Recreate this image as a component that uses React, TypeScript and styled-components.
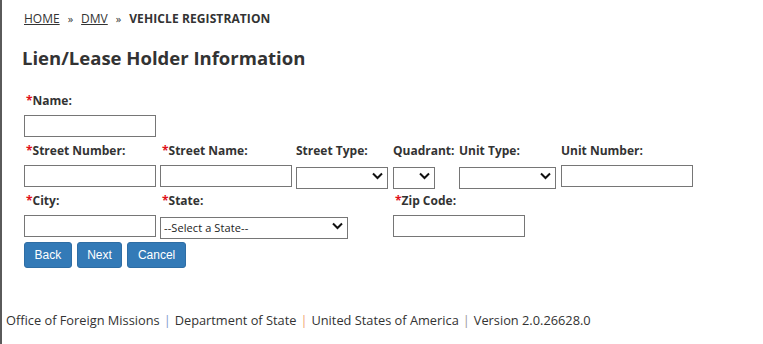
import React from "react";
import styled, { createGlobalStyle } from "styled-components";

const Global = createGlobalStyle`
  html, body { margin: 0; padding: 0; background: #fff; }
  body {
    min-height: 100vh;
    box-sizing: border-box;
    border-left: 2px solid #5a5a5a;
    font-family: "Open Sans", "DejaVu Sans", sans-serif;
    color: #333;
  }
`;

const Page = styled.div`
  padding-left: 22px;
  padding-top: 11px;
`;

const Breadcrumb = styled.nav`
  display: flex;
  align-items: center;
  gap: 6px;
  font-size: 12px;
  line-height: 16px;
  color: #333;
`;

const Crumb = styled.a`
  color: #333;
  text-decoration: underline;
`;

const Sep = styled.span`
  font-size: 11px;
  margin: 0 2px;
`;

const Current = styled.span`
  font-weight: 700;
  letter-spacing: 0.1px;
`;

const Title = styled.h1`
  margin: 19px 0 0 -2px;
  font-size: 18.5px;
  line-height: 24px;
  font-weight: 700;
  color: #333;
`;

const FormGrid = styled.div`
  margin-top: 17px;
  display: grid;
  grid-template-columns: 132px 132px 93px 62px 98px 131px;
  column-gap: 4px;
  align-items: start;
`;

const Field = styled.div<{ $span?: number; $start?: number }>`
  display: flex;
  flex-direction: column;
  grid-column: ${(p) => (p.$start ? `${p.$start} / span ${p.$span ?? 1}` : `span ${p.$span ?? 1}`)};
`;

const Label = styled.label`
  height: 28px;
  line-height: 28px;
  font-size: 12px;
  font-weight: 700;
  color: #333;
  white-space: nowrap;
`;

const Req = styled.span`
  color: #e0101a;
  margin-left: 2px;
`;

const TextInput = styled.input`
  box-sizing: border-box;
  width: 132px;
  height: 22px;
  margin: 0;
  border: 1px solid #767676;
  background: #fff;
  font-size: 12px;
  padding: 0 4px;
`;

const SelectWrap = styled.div<{ $w: number }>`
  position: relative;
  width: ${(p) => p.$w}px;
  height: 22px;
`;

const Select = styled.select`
  appearance: none;
  box-sizing: border-box;
  width: 100%;
  height: 22px;
  margin: 0;
  border: 1px solid #767676;
  background: #fff;
  font-family: "Open Sans", "DejaVu Sans", sans-serif;
  font-size: 11px;
  letter-spacing: 0.1px;
  color: #222;
  padding: 0 3px;
`;

const Chevron = styled.svg`
  position: absolute;
  right: 5px;
  top: 7px;
  pointer-events: none;
`;

const Buttons = styled.div`
  display: flex;
  gap: 5px;
  margin-top: 5px;
`;

const Button = styled.button`
  height: 26px;
  padding: 0 9.5px;
  border: 1px solid #2e6da4;
  border-radius: 3px;
  background: #337ab7;
  color: #fff;
  font-family: "Liberation Sans", Arial, sans-serif;
  font-size: 12px;
`;

const Footer = styled.footer`
  margin: 44px 0 0 -18px;
  font-size: 12.8px;
  line-height: 16px;
  color: #333;
`;

const Bar = styled.span<{ $c: string }>`
  color: ${(p) => p.$c};
  margin: 0 4px;
`;

function Dropdown({ w, placeholder }: { w: number; placeholder?: string }) {
  return (
    <SelectWrap $w={w}>
      <Select defaultValue="">
        <option value="">{placeholder ?? ""}</option>
      </Select>
      <Chevron width="11" height="8" viewBox="0 0 11 8">
        <path d="M1 1.5 L5.5 6 L10 1.5" fill="none" stroke="#111" strokeWidth="2" />
      </Chevron>
    </SelectWrap>
  );
}

export default function App() {
  return (
    <>
      <Global />
      <Page>
        <Breadcrumb>
          <Crumb href="#">HOME</Crumb>
          <Sep>»</Sep>
          <Crumb href="#">DMV</Crumb>
          <Sep>»</Sep>
          <Current>VEHICLE REGISTRATION</Current>
        </Breadcrumb>
        <Title>Lien/Lease Holder Information</Title>
        <FormGrid>
          <Field $start={1}>
            <Label><Req>*</Req>Name:</Label>
            <TextInput />
          </Field>
          <Field $start={1}>
            <Label><Req>*</Req>Street Number:</Label>
            <TextInput />
          </Field>
          <Field>
            <Label><Req>*</Req>Street Name:</Label>
            <TextInput />
          </Field>
          <Field>
            <Label>Street Type:</Label>
            <Dropdown w={92} />
          </Field>
          <Field>
            <Label>Quadrant:</Label>
            <Dropdown w={42} />
          </Field>
          <Field>
            <Label>Unit Type:</Label>
            <Dropdown w={97} />
          </Field>
          <Field>
            <Label>Unit Number:</Label>
            <TextInput />
          </Field>
          <Field $start={1}>
            <Label><Req>*</Req>City:</Label>
            <TextInput />
          </Field>
          <Field $span={2}>
            <Label><Req>*</Req>State:</Label>
            <Dropdown w={188} placeholder="--Select a State--" />
          </Field>
          <Field $span={2}>
            <Label><Req>*</Req>Zip Code:</Label>
            <TextInput />
          </Field>
        </FormGrid>
        <Buttons>
          <Button>Back</Button>
          <Button>Next</Button>
          <Button>Cancel</Button>
        </Buttons>
        <Footer>
          Office of Foreign Missions<Bar $c="#7f9ccc">|</Bar>Department of State
          <Bar $c="#f0a070">|</Bar>United States of America<Bar $c="#999">|</Bar>Version 2.0.26628.0
        </Footer>
      </Page>
    </>
  );
}
